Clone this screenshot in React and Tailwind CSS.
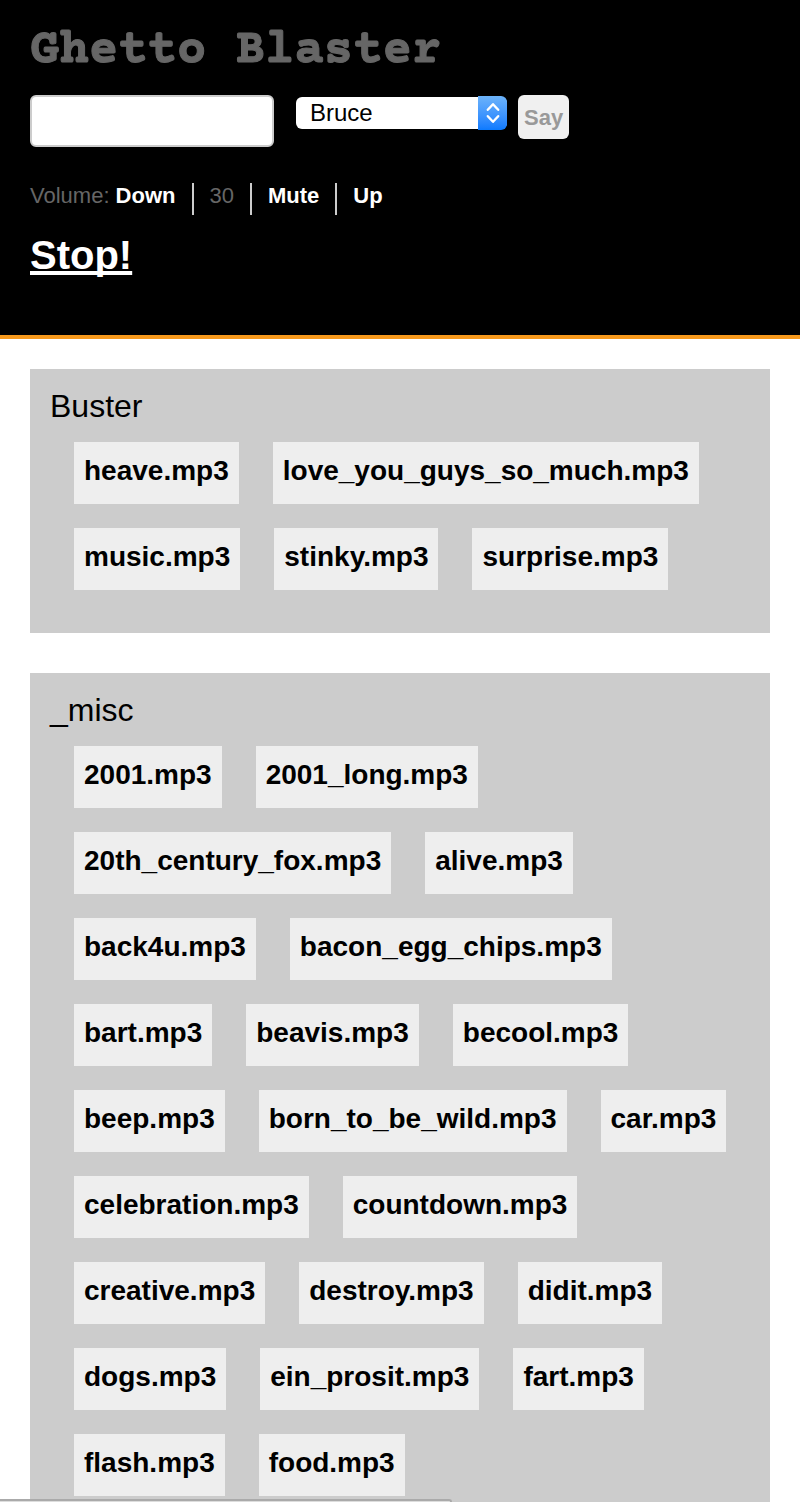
const library = [
  {
    name: "Buster",
    files: ["heave.mp3", "love_you_guys_so_much.mp3", "music.mp3", "stinky.mp3", "surprise.mp3"],
  },
  {
    name: "_misc",
    files: [
      "2001.mp3", "2001_long.mp3", "20th_century_fox.mp3", "alive.mp3", "back4u.mp3",
      "bacon_egg_chips.mp3", "bart.mp3", "beavis.mp3", "becool.mp3", "beep.mp3",
      "born_to_be_wild.mp3", "car.mp3", "celebration.mp3", "countdown.mp3", "creative.mp3",
      "destroy.mp3", "didit.mp3", "dogs.mp3", "ein_prosit.mp3", "fart.mp3", "flash.mp3", "food.mp3",
    ],
  },
];

function SayForm() {
  return (
    <form className="mt-[13px] flex items-start" onSubmit={(e) => e.preventDefault()}>
      <input
        type="text"
        aria-label="Text to say"
        className="h-[52px] w-[244px] rounded-md border-2 border-[#ccc] bg-white px-2 text-[22px] text-black"
      />
      <div className="relative ml-[22px] flex h-9 w-[211px] items-center">
        <select
          aria-label="Voice"
          defaultValue="Bruce"
          className="h-8 w-full appearance-none rounded-md bg-white pr-8 pl-[14px] text-[24px] leading-8 text-black"
        >
          <option>Bruce</option>
        </select>
        <span className="pointer-events-none absolute top-px right-0 flex h-[34px] w-[29px] items-center justify-center rounded-r-md bg-linear-to-b from-[#6cb3fa] to-[#0a7aff]">
          <svg width="14" height="22" viewBox="0 0 14 22" fill="none" stroke="white" strokeWidth="2.4" strokeLinecap="round" strokeLinejoin="round" aria-hidden="true">
            <path d="M1.8 7.8 7 2.2l5.2 5.6M1.8 14.2 7 19.8l5.2-5.6" />
          </svg>
        </span>
      </div>
      <button type="submit" className="ml-[11px] h-11 rounded-md bg-[#f0f0f0] px-[6px] text-[22px] font-bold text-[#999]">
        Say
      </button>
    </form>
  );
}

function Volume() {
  return (
    <ul className="mt-9 flex text-[22px] leading-[26px] text-[#666]">
      <li className="border-r-2 border-[#ccc] pr-4 pb-[6px]">
        Volume: <a href="#down" className="font-bold text-white">Down</a>
      </li>
      <li className="border-r-2 border-[#ccc] px-4 pb-[6px]">30</li>
      <li className="border-r-2 border-[#ccc] px-4 pb-[6px]">
        <a href="#mute" className="font-bold text-white">Mute</a>
      </li>
      <li className="px-4 pb-[6px]">
        <a href="#up" className="font-bold text-white">Up</a>
      </li>
    </ul>
  );
}

function Folder({ name, files }) {
  return (
    <section className="bg-[#ccc] px-5 pt-5 pb-[43px] last:grow last:pb-0">
      <h2 className="text-[32px] leading-[34px]">{name}</h2>
      <ul className="mt-[19px] flex flex-wrap gap-x-[34px] gap-y-6 pl-6">
        {files.map((file) => (
          <li key={file}>
            <a href={"#" + file} className="block bg-[#eee] px-[10px] pt-[13px] pb-[17px] text-[28px] leading-8 font-bold">
              {file}
            </a>
          </li>
        ))}
      </ul>
    </section>
  );
}

export default function App() {
  return (
    <div className="flex min-h-screen flex-col bg-white font-['Liberation_Sans',Arial,sans-serif] text-black">
      <header className="border-b-4 border-[#f7991c] bg-black px-[30px] pt-[22px] pb-[58px]">
        <h1 className="font-['Courier_Prime','Nimbus_Mono_PS','FreeMono','Liberation_Mono',monospace] text-[49px] leading-[60px] font-bold text-[#666] [-webkit-text-stroke:1px_#666]">
          Ghetto Blaster
        </h1>
        <SayForm />
        <Volume />
        <a
          href="#stop"
          className="mt-[18px] inline-block text-[40px] leading-[44px] font-bold text-white underline decoration-4 underline-offset-2 [text-decoration-skip-ink:none]"
        >
          Stop!
        </a>
      </header>
      <main className="flex grow flex-col gap-10 px-[30px] pt-[30px]">
        {library.map((folder) => (
          <Folder key={folder.name} name={folder.name} files={folder.files} />
        ))}
      </main>
      <div className="fixed bottom-0 left-0 h-[3px] w-[452px] rounded-tr-md border-t-2 border-r-2 border-[#aaa] bg-[#ddd]" />
    </div>
  );
}
